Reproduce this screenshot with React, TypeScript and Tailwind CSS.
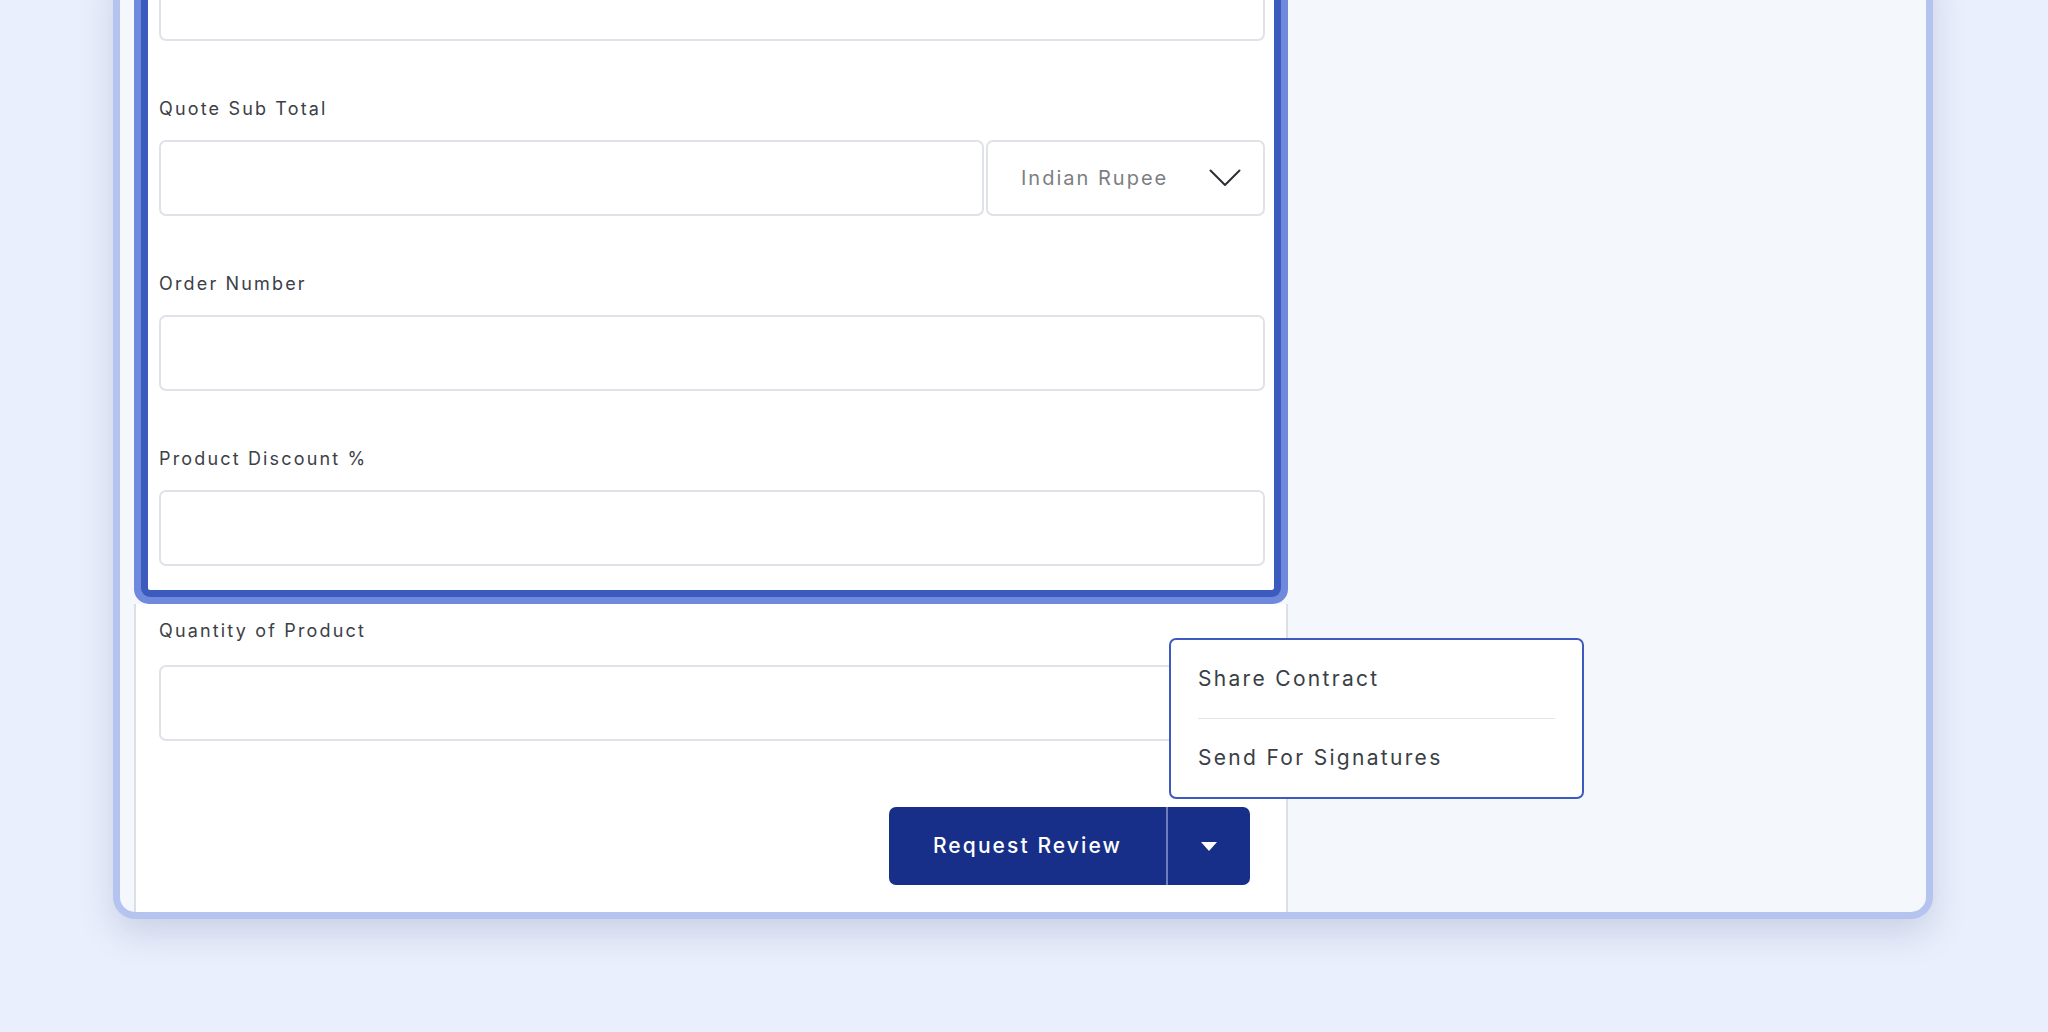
import React from 'react';

function Field({ label, children }: { label: string; children?: React.ReactNode }) {
  return (
    <div className="mt-[56px] flex flex-col">
      <label className="h-[24px] leading-[24px] text-[18px] tracking-[0.12em] text-[#3c4047]">{label}</label>
      <div className="mt-[19px]">
        {children ?? <div className="h-[76px] rounded-[7px] border-2 border-[#dfe2e6] bg-white" />}
      </div>
    </div>
  );
}

export default function App() {
  return (
    <div className="h-screen w-full overflow-hidden bg-[#e9effc] flex flex-col justify-end pb-[113px] font-['Inter',sans-serif]">
      <div className="ml-[113px] w-[1820px] rounded-b-[22px] border-[7px] border-t-0 border-[#b4c4ef] bg-[#f4f8fd] pl-[14px] shadow-[0_14px_34px_rgba(90,105,150,0.22)] flex">
        <div className="w-[1154px] flex flex-col">
          {/* highlighted block */}
          <div className="rounded-b-[15px] bg-[#6f89dc] px-[7px] pb-[7px]">
            <div className="rounded-b-[9px] border-x-[7px] border-b-[7px] border-[#3d5bbf] bg-white pl-[11px] pr-[9px] pb-[24px]">
              <div className="h-[76px] rounded-[7px] border-2 border-[#dfe2e6] bg-white" />

              <Field label="Quote Sub Total">
                <div className="flex gap-[2px]">
                  <div className="h-[76px] flex-1 rounded-[7px] border-2 border-[#dfe2e6] bg-white" />
                  <div className="h-[76px] w-[279px] rounded-[7px] border-2 border-[#dfe2e6] bg-white flex items-center justify-between pl-[33px] pr-[22px]">
                    <span className="text-[20px] tracking-[0.1em] text-[#7b7e83]">Indian Rupee</span>
                    <svg width="32" height="18" viewBox="0 0 32 18" fill="none">
                      <path d="M1.5 1.5 16 16 30.5 1.5" stroke="#2d2f33" strokeWidth="2" strokeLinecap="round" strokeLinejoin="round" />
                    </svg>
                  </div>
                </div>
              </Field>

              <Field label="Order Number" />
              <Field label="Product Discount %" />
            </div>
          </div>

          {/* rest of panel */}
          <div className="border-x-2 border-[#dcdfe3] bg-white pl-[23px] pr-[22px] pb-[27px]">
            <div className="mt-[15px] flex flex-col">
              <label className="h-[24px] leading-[24px] text-[18px] tracking-[0.12em] text-[#3c4047]">Quantity of Product</label>
              <div className="mt-[22px] h-[76px] rounded-[7px] border-2 border-[#dfe2e6] bg-white" />
            </div>

            <div className="mt-[66px] flex justify-end pr-[14px]">
              <div className="relative flex h-[78px] rounded-[7px] bg-[#172f88] text-white">
                <button className="w-[277px] text-[21px] font-medium tracking-[0.1em]">Request Review</button>
                <div className="w-[2px] bg-[#6f7eb8]" />
                <button className="w-[82px] flex items-center justify-center">
                  <svg width="16" height="9" viewBox="0 0 16 9">
                    <path d="M0 0h16L8 9z" fill="#ffffff" />
                  </svg>
                </button>

                <div className="absolute left-[280px] bottom-[86px] w-[415px] rounded-[7px] border-2 border-[#3d5bbf] bg-white px-[27px] text-[21px] tracking-[0.11em] text-[#3a3e45]">
                  <div className="h-[78px] flex items-center">Share Contract</div>
                  <div className="h-px bg-[#e3e5e8]" />
                  <div className="h-[78px] flex items-center">Send For Signatures</div>
                </div>
              </div>
            </div>
          </div>
        </div>
      </div>
    </div>
  );
}
